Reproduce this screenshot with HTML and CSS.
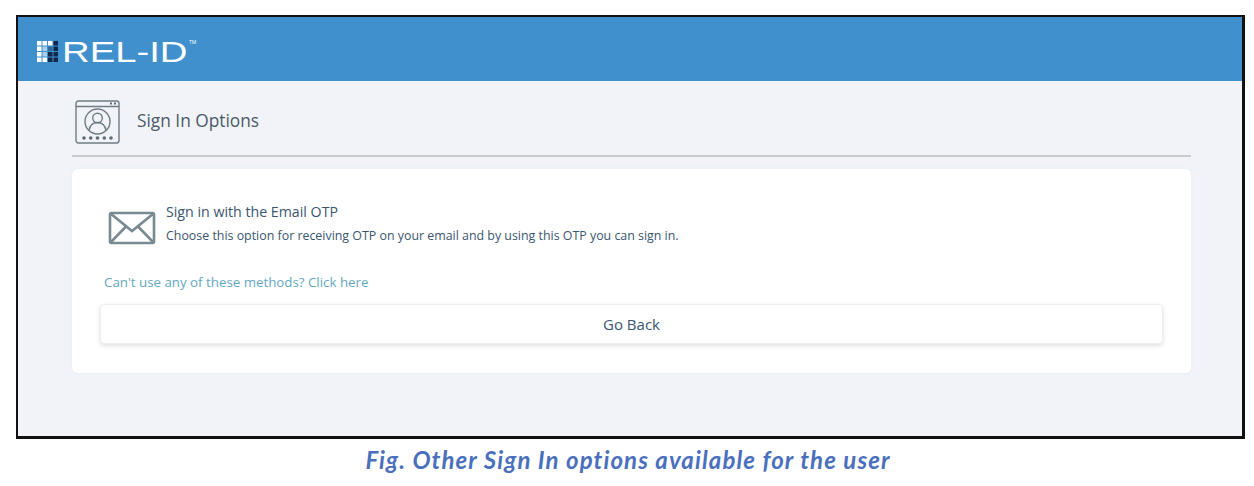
FILE: index.html
```html
<!doctype html>
<html>
<head>
  <title>Sign In Options</title>
  <link rel="stylesheet" href="styles.css">
</head>
<body>

<div class="frame">
  <div class="topbar">
    <svg class="logo-mark" width="22" height="21" viewBox="0 0 22 21">
      <g fill="#ffffff">
        <rect x="0" y="0" width="4.500" height="4.500"/><rect x="5.500" y="0" width="4.500" height="4.500"/><rect x="11" y="0" width="4.500" height="4.500"/>
        <rect x="0" y="5.500" width="4.500" height="4.500"/><rect x="0" y="11" width="4.500" height="4.500"/><rect x="0" y="16.500" width="4.500" height="4.500"/><rect x="5.500" y="16.500" width="4.500" height="4.500"/>
      </g>
      <g fill="#a9cfe9">
        <rect x="5.500" y="5.500" width="4.500" height="4.500"/><rect x="5.500" y="11" width="4.500" height="4.500"/>
      </g>
      <rect x="11" y="5.500" width="4.500" height="4.500" fill="#2f6c9e"/>
      <g fill="#10294a">
        <rect x="16.500" y="0" width="4.500" height="4.500"/><rect x="16.500" y="5.500" width="4.500" height="4.500"/><rect x="11" y="11" width="4.500" height="4.500"/><rect x="16.500" y="11" width="4.500" height="4.500"/><rect x="11" y="16.500" width="4.500" height="4.500"/><rect x="16.500" y="16.500" width="4.500" height="4.500"/>
      </g>
    </svg>
    <span class="logo-text">REL-ID</span><span class="logo-tm">TM</span>
  </div>

  <div class="content">
    <div class="page-head">
      <svg class="head-icon" width="45" height="44" viewBox="0 0 45 44" fill="none" stroke="#6f7c84" stroke-width="1.400">
        <rect x="1" y="1" width="43" height="42" rx="2.500"/>
        <path d="M1 6.500h43"/>
        <circle cx="22.500" cy="21.500" r="12.500"/>
        <circle cx="22.500" cy="18" r="4.800"/>
        <path d="M14 30.500c1-5.500 4-8 8.500-8s7.500 2.500 8.500 8"/>
        <g fill="#5f6b73" stroke="none">
          <circle cx="9" cy="38" r="1.800"/><circle cx="15.700" cy="38" r="1.800"/><circle cx="22.500" cy="38" r="1.800"/><circle cx="29.300" cy="38" r="1.800"/><circle cx="36" cy="38" r="1.800"/>
          <rect x="35" y="2.500" width="2" height="2"/><rect x="39" y="2.500" width="2" height="2"/>
        </g>
      </svg>
      <h1 class="page-title">Sign In Options</h1>
    </div>

    <div class="card">
      <div class="option">
        <svg class="mail-icon" width="48" height="34" viewBox="0 0 48 34" fill="none" stroke="#7a8a92" stroke-width="2.600">
          <rect x="2" y="2" width="44" height="30" rx="1.500"/>
          <path d="M2.500 2.500 L24 20 L45.500 2.500"/>
          <path d="M2.500 31.500 L18 15.500 M45.500 31.500 L30 15.500"/>
        </svg>
        <div class="option-text">
          <div class="option-title">Sign in with the Email OTP</div>
          <div class="option-desc">Choose this option for receiving OTP on your email and by using this OTP you can sign in.</div>
        </div>
      </div>
      <a class="help-link">Can't use any of these methods? Click here</a>
      <button class="back-btn">Go Back</button>
    </div>
  </div>
</div>

<div class="caption">Fig. Other Sign In options available for the user</div>

</body>
</html>
```

FILE: styles.css
```css
body {
  margin: 0;
  background: #ffffff;
  font-family: "Open Sans", sans-serif;
  overflow: hidden;
}

.frame {
  margin: 15px 9px 0 16px;
  height: 419px;
  border: 3px solid #111111;
  border-width: 2px 3px 3px 2px;
  background: #f1f3f9;
}

.topbar {
  height: 64px;
  background: #4090cd;
  display: flex;
  align-items: center;
  padding-left: 19px;
  color: #ffffff;
}

.logo-mark {
  margin-top: 4px;
}

.logo-text {
  display: inline-block;
  font-family: "Liberation Sans", sans-serif;
  font-size: 29px;
  line-height: 28px;
  margin: 6px 32px 0 3px;
  transform: scaleX(1.320);
  transform-origin: left center;
}

.logo-tm {
  font-size: 5px;
  line-height: 7px;
  align-self: flex-start;
  margin-top: 22px;
}

.content {
  padding: 0 51px 0 54px;
}

.page-head {
  display: flex;
  align-items: center;
  gap: 17px;
  height: 76px;
  padding: 4px 0 0 3px;
  border-bottom: 2px solid #c9cacb;
  box-sizing: border-box;
}

.head-icon {
  margin-top: 4px;
}

.page-title {
  margin: 0;
  font-size: 17.300px;
  font-weight: 400;
  color: #4a5a66;
}

.card {
  margin-top: 12px;
  background: #ffffff;
  border-radius: 6px;
  box-shadow: 0 0 4px #e4edf6;
  padding: 31px 28px 28px;
  height: 204px;
  box-sizing: border-box;
  display: flex;
  flex-direction: column;
}

.option {
  display: flex;
  align-items: center;
  gap: 10px;
  padding-left: 8px;
}

.mail-icon {
  margin-top: 7px;
}

.option-title {
  font-size: 14.200px;
  line-height: 24px;
  color: #3a5670;
}

.option-desc {
  font-size: 12.400px;
  line-height: 24px;
  color: #3a5670;
}

.help-link {
  margin-top: 24px;
  padding-left: 4px;
  font-size: 13.300px;
  line-height: 20px;
  color: #64a8c0;
}

.back-btn {
  margin-top: 12px;
  height: 40px;
  background: #ffffff;
  border: 1px solid #eeeeee;
  border-radius: 4px;
  box-shadow: 0 2px 5px rgba(0, 0, 0, 0.12);
  font-family: "Open Sans", sans-serif;
  font-size: 15px;
  color: #3a5670;
}

.caption {
  margin-top: 6px;
  padding-left: 2px;
  text-align: center;
  font-family: "Lato", sans-serif;
  font-weight: 700;
  font-style: italic;
  font-size: 24px;
  letter-spacing: 1.100px;
  color: #4a70bd;
}
```
